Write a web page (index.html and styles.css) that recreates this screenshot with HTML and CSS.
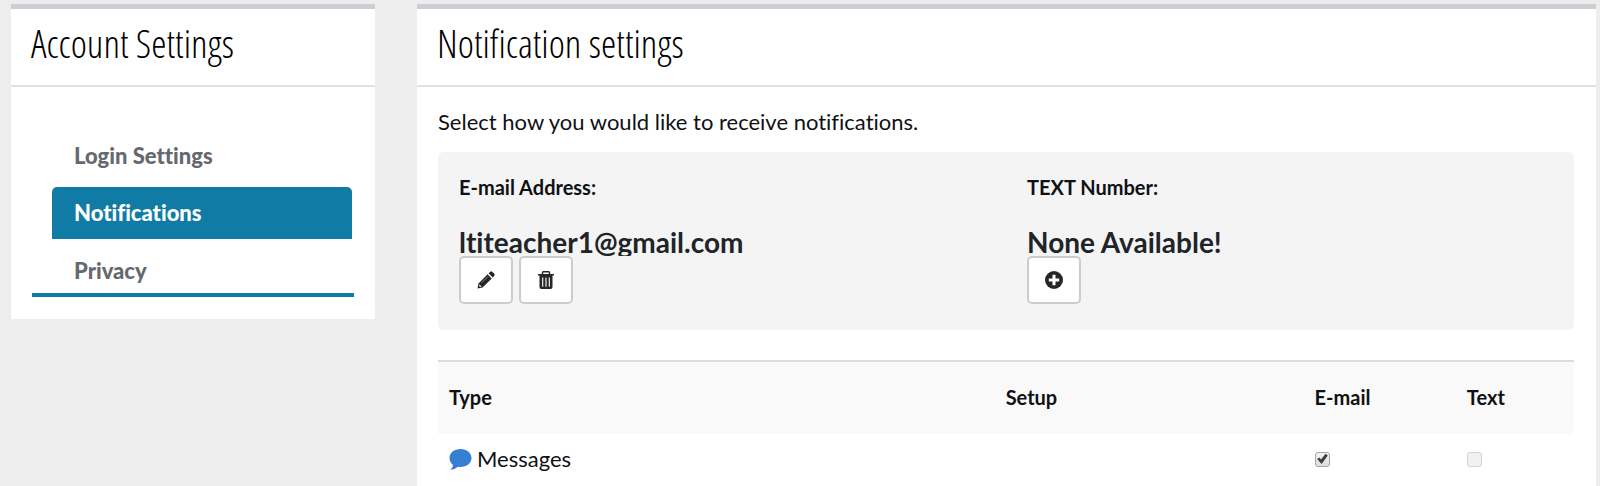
FILE: index.html
```html
<!DOCTYPE html>
<html lang="en">
<head>
<meta charset="utf-8">
<title>Account Settings</title>
<link rel="stylesheet" href="styles.css">
</head>
<body>
<div class="page">
  <aside class="panel">
    <h1 class="panel-title">Account Settings</h1>
    <nav class="side-nav" aria-label="Account settings">
      <a class="nav-link" href="#login">Login Settings</a>
      <a class="nav-link active" href="#notifications" aria-current="page">Notifications</a>
      <a class="nav-link" href="#privacy">Privacy</a>
    </nav>
  </aside>
  <main class="panel main-panel">
    <h1 class="panel-title">Notification settings</h1>
    <div class="panel-body">
      <p class="intro">Select how you would like to receive notifications.</p>
      <div class="contact-box">
        <section class="contact">
          <h2 class="contact-label">E-mail Address:</h2>
          <p class="contact-value">ltiteacher1@gmail.com</p>
          <div class="actions">
            <button class="icon-button" type="button" aria-label="Edit e-mail">
              <svg class="icon" viewBox="0 0 18 18"><path d="M0.5 17.5 L1.5 12.4 L10.6 3.3 L14.7 7.4 L5.6 16.5 Z M11.6 2.3 L13.3.7 Q14.4-.1 15.4.9 L17.1 2.6 Q18.1 3.6 17.3 4.7 L15.7 6.4 Z" fill="#262626"/><path d="M2.4 13.4 L4.6 15.6 L3.2 16 L2 14.8 Z" fill="#fff"/><path d="M4.6 11.8 L11 5.4" stroke="#aaa" stroke-width=".7"/></svg>
            </button>
            <button class="icon-button" type="button" aria-label="Delete e-mail">
              <svg class="icon" viewBox="0 0 18 18"><path d="M1 3 H17 V4.6 H1 Z M2.5 4.6 H15.5 V16 Q15.5 18 13.5 18 H4.5 Q2.5 18 2.5 16 Z" fill="#262626"/><path d="M5.5 3.2 V1.6 Q5.5.7 6.4.7 H11.6 Q12.5.7 12.5 1.6 V3.2" fill="none" stroke="#262626" stroke-width="1.4"/><path d="M5.7 6.4 V15.8 M9 6.4 V15.8 M12.3 6.4 V15.8" stroke="#fff" stroke-width="1.1"/></svg>
            </button>
          </div>
        </section>
        <section class="contact">
          <h2 class="contact-label">TEXT Number:</h2>
          <p class="contact-value">None Available!</p>
          <div class="actions">
            <button class="icon-button" type="button" aria-label="Add text number">
              <svg class="icon" viewBox="0 0 18 18"><circle cx="9" cy="9" r="9" fill="#262626"/><path d="M9 3.8 V14.2 M3.8 9 H14.2" stroke="#fff" stroke-width="3"/></svg>
            </button>
          </div>
        </section>
      </div>
      <table class="types">
        <colgroup><col class="col-type"><col class="col-setup"><col class="col-email"><col class="col-text"></colgroup>
        <thead>
          <tr><th scope="col">Type</th><th scope="col">Setup</th><th scope="col">E-mail</th><th scope="col">Text</th></tr>
        </thead>
        <tbody>
          <tr>
            <td><span class="type-name"><svg class="bubble" viewBox="0 0 23 21"><path d="M11.5 0 C17.8 0 22.5 3.9 22.5 9 C22.5 14.1 17.8 18 11.5 18 C10.5 18 9.6 17.9 8.7 17.7 C6.6 19.6 4.2 20.7 1.2 20.8 C2.8 19.4 3.7 18 4 15.9 C1.7 14.2 .5 11.8 .5 9 C.5 3.9 5.2 0 11.5 0 Z" fill="#357ed2"/></svg>Messages</span></td>
            <td></td>
            <td><input class="check" type="checkbox" aria-label="Messages by e-mail" checked></td>
            <td><input class="check" type="checkbox" aria-label="Messages by text" disabled></td>
          </tr>
        </tbody>
      </table>
    </div>
  </main>
</div>
</body>
</html>
```
FILE: styles.css
```css
* { box-sizing: border-box; }

body {
  margin: 0;
  background: #ededed;
  color: #101114;
  font-family: Lato, "Noto Sans", sans-serif;
  font-size: 22px;
  font-variant-ligatures: none;
  line-height: 28px;
}

.page {
  display: grid;
  grid-template-columns: 364fr 1179fr;
  gap: 42px;
  align-items: start;
  min-height: 100vh;
  padding: 4px 4px 0 11px;
}

.panel {
  background: #fff;
  border-top: 5px solid #cdced3;
}

.main-panel { align-self: stretch; }

.panel-title {
  margin: 0;
  padding: 12px 20px 20px;
  border-bottom: 2px solid #e0e1e1;
  color: #000;
  font-family: "Open Sans Condensed Light", "Noto Sans", sans-serif;
  font-size: 39px;
  font-weight: 400;
  line-height: 44px;
}

.side-nav {
  display: flex;
  flex-direction: column;
  gap: 5px;
  margin: 43px 21px 0;
  padding: 0 2px 0 20px;
  border-bottom: 4px solid #107ca5;
}

.panel:has(.side-nav) { padding-bottom: 22px; }

.nav-link {
  padding: 12px 22px;
  border-radius: 5px 5px 0 0;
  color: #65696f;
  font-weight: 900;
  text-decoration: none;
}

.nav-link.active { background: #107ca5; color: #fff; }

.nav-link:last-child { padding: 13px 22px 8px; }

.panel-body { padding: 21px 22px 0 21px; }

.intro { margin: 0 0 16px; }

.contact-box {
  display: grid;
  grid-template-columns: 1fr 1fr;
  padding: 21px 0 26px;
  border-radius: 6px;
  background: #f4f4f4;
}

.contact { padding-left: 21px; }

.contact-label {
  margin: 0 0 29px;
  font-size: 20px;
  line-height: 28px;
}

.contact-value {
  margin: 0;
  padding-bottom: 2px;
  overflow: hidden;
  color: #1f2429;
  font-size: 28px;
  font-weight: 700;
  line-height: 24px;
}

.actions { display: flex; gap: 6px; }

.icon-button {
  display: flex;
  align-items: center;
  justify-content: center;
  width: 54px;
  height: 48px;
  padding: 0;
  border: 2px solid #ccc;
  border-radius: 5px;
  background: #fff;
}

.icon { width: 18px; height: 18px; }

.types {
  width: 100%;
  margin-top: 30px;
  border-spacing: 0;
  table-layout: fixed;
}

.col-type { width: 49%; }
.col-setup { width: 27.2%; }
.col-email { width: 13.4%; }

.types th {
  padding: 21px 11px 23px;
  border-top: 2px solid #dcdddd;
  background: #f9f9f9;
  font-size: 20px;
  text-align: left;
}

.types th:last-child { border-bottom-right-radius: 6px; }

.types td { padding: 11px; }

.type-name { display: flex; align-items: center; gap: 5px; }

.bubble { width: 23px; height: 21px; }

.check {
  display: block;
  appearance: none;
  width: 15px;
  height: 15px;
  margin: 0;
  border: 1px solid #a5a5a5;
  border-radius: 3px;
  background: linear-gradient(#f2f2f2, #dcdcdc);
}

.check:checked::before {
  content: "";
  display: block;
  width: 13px;
  height: 13px;
  background: #3d3d3d;
  clip-path: polygon(12% 50%, 28% 38%, 42% 54%, 76% 10%, 94% 24%, 46% 88%);
}

.check:disabled { border-color: #d2d2d2; background: #f1f1f1; }
```
